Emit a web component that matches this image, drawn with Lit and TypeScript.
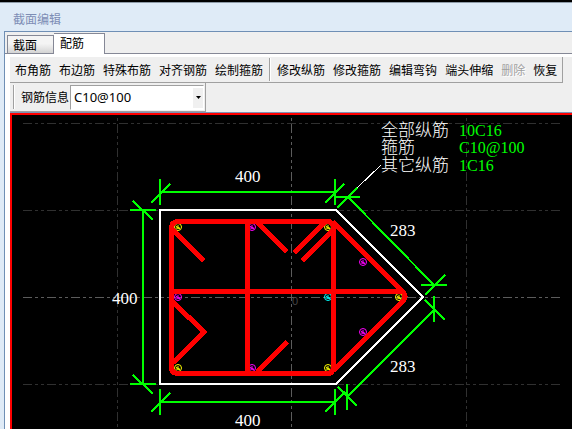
import { LitElement, html, svg, css } from "lit";
import { customElement, state } from "lit/decorators.js";

type Seg = [number, number, number, number];

/** Dimension lines with their end ticks and slashes. */
const DIMENSIONS: Seg[] = [
  // top
  [160, 192, 335, 192], [160, 179, 160, 205], [151, 203, 170, 184], [335, 179, 335, 205], [325, 203, 344, 184],
  // left
  [143, 210, 143, 384], [130, 210, 156, 210], [133, 201, 153, 220], [130, 384, 156, 384], [133, 375, 153, 394],
  // bottom
  [160, 402, 335, 402], [160, 389, 160, 415], [151, 412, 170, 393], [335, 389, 335, 415], [325, 412, 345, 392],
  // upper slope
  [348, 197, 434, 285], [335, 197, 360, 197], [337, 208, 357, 188], [421, 285, 447, 285], [425, 295, 445, 275],
  // lower slope
  [434, 310, 347, 397], [434, 296, 434, 322], [425, 300, 445, 320], [347, 384, 347, 410], [338, 387, 357, 406],
];

const BARS: [number, number, string][] = [
  [178, 227, "corner"], [328, 227, "corner"], [178, 368, "corner"], [328, 368, "corner"], [399, 297, "corner"],
  [252, 227, "side"], [252, 368, "side"], [178, 297, "side"], [363, 262, "side"], [363, 332, "side"],
  [328, 297, "other"],
];

const DIM_TEXT: [number, number, string][] = [
  [235, 182, "400"], [112, 304, "400"], [235, 426, "400"], [390, 236, "283"], [390, 372, "283"],
];

const NOTES: [number, string, string][] = [
  [136, "全部纵筋", "10C16"], [153, "箍筋", "C10@100"], [171, "其它纵筋", "1C16"],
];

@customElement("section-drawing")
export class SectionDrawing extends LitElement {
  static styles = css`
    :host { display: block; background: #000; border-top: 2px solid #f00; border-left: 2px solid #f00; }
    svg { display: block; width: 100%; height: auto; }
    .lines { fill: none; shape-rendering: crispEdges; }
    .axis { stroke: #303030; stroke-width: 1; stroke-dasharray: 9 3 3 3 3 3; }
    .main { stroke: #5c5c5c; }
    .outline { stroke: #fff; stroke-width: 2; }
    .leader { stroke: #fff; stroke-width: 1; }
    .dim { stroke: #0f0; stroke-width: 2; }
    .rebar { stroke: #f00; stroke-width: 5; stroke-linejoin: round; }
    .bar { fill: none; stroke-width: 1; }
    .corner { stroke: #ff0; }
    .side { stroke: #f0f; }
    .other { stroke: #0ff; }
    text { fill: #fff; font-family: "Liberation Serif", serif; font-size: 17px; }
    .name { font-family: "Noto Sans CJK SC", sans-serif; font-weight: 300; }
    .value { fill: #0f0; font-size: 16px; }
    .origin { fill: #444; font-family: "Liberation Sans", sans-serif; font-size: 11px; }
  `;

  render() {
    return html`
      <svg viewBox="12 115 560 314" role="img" aria-label="配筋">
        <g class="lines">
          ${[123, 210, 297, 384].map((y) => svg`<path class="axis ${y === 297 ? "main" : ""}" d="M23 ${y}.5H560" />`)}
          ${[117, 291, 466].map((x) => svg`<path class="axis ${x === 291 ? "main" : ""}" stroke-dashoffset="15" d="M${x}.5 115V429" />`)}
          <path class="outline" d="M160 210H336L423 297L336 384H160Z" />
          ${DIMENSIONS.map(([a, b, c, d]) => svg`<line class="dim" x1=${a} y1=${b} x2=${c} y2=${d} />`)}
          <path class="leader" d="M357 188L381 165" />
        </g>
        ${BARS.map(([x, y, kind]) => svg`
          <g class="bar ${kind}">
            <circle cx=${x} cy=${y} r="3.5" />
            <path d="M${x - 2} ${y + 1}H${x + 2}M${x} ${y - 2}V${y + 2}M${x - 2} ${y - 1}L${x + 2} ${y + 2}" />
          </g>`)}
        <g class="lines">
          <path class="rebar" d="M178 221.5H327Q333.5 221.5 333.5 228V367Q333.5 373.5 327 373.5H178Q171.5 373.5 171.5 367V228Q171.5 221.5 178 221.5Z" />
          <path class="rebar" d="M247.5 222V373M172 291.5H402" />
          <path class="rebar" d="M333 222L403 292Q407 297 403 301L333 371" />
          <path class="rebar" d="M173 230L204 261M256 221L287 252M325 222L294 253M333 230L302 261" />
          <path class="rebar" d="M173 302L204 332L173 363M257 372L287 342" />
        </g>
        ${DIM_TEXT.map(([x, y, t]) => svg`<text x=${x} y=${y}>${t}</text>`)}
        ${NOTES.map(([y, name, value]) => svg`
          <text class="name" x="381" y=${y}>${name}</text>
          <text class="value" x="459" y=${y}>${value}</text>`)}
        <text class="origin" x="292" y="305">0</text>
      </svg>`;
  }
}

@customElement("app-root")
export class AppRoot extends LitElement {
  static styles = css`
    * { box-sizing: border-box; }
    :host {
      display: flex; flex-direction: column; min-height: 100vh; box-sizing: border-box;
      background: #dfebf7; border-top: 2px solid #000; overflow: hidden;
      font: 12px/16px "Noto Sans CJK SC", sans-serif; color: #000;
    }
    button, select { font: inherit; color: inherit; margin: 0; border-radius: 0; }
    .title { height: 29px; padding: 8px 13px 0; border-top: 1px solid #8e9ba8; color: #7d8db5; font-size: 12px; font-weight: 400; margin: 0; }
    .frame {
      flex: 1; display: flex; flex-direction: column; margin-left: 4px;
      border-top: 1px solid #6f8fb5; border-left: 1px solid #6f8fb5; background: #efefef;
    }
    .tabs { display: flex; align-items: flex-end; height: 22px; padding-left: 2px; border-bottom: 1px solid #858896; }
    .tab { height: 18px; padding: 0 16px 0 5px; border: 1px solid #858896; border-bottom: 0; background: linear-gradient(#f4f4f4 45%, #d4d4d4); text-align: left; }
    .tab.on { height: 21px; padding: 0 20px 3px 6px; background: #fff; margin-bottom: -1px; border-left: 0; }
    .page { flex: 1; display: flex; flex-direction: column; background: #fff; padding: 3px 0 0 5px; }
    .bars { background: #efefef; }
    .toolbar { display: flex; align-items: center; width: fit-content; height: 26px; padding: 0 1px; border-right: 1px solid #a0a0a0; border-bottom: 1px solid #a0a0a0; }
    .tool { border: 0; background: none; padding: 0 4px; white-space: nowrap; }
    .tool:disabled { color: #a0a0a0; text-shadow: 1px 1px #fff; }
    .sep { width: 2px; height: 23px; margin: 0 2px; border-left: 1px solid #a0a0a0; border-right: 1px solid #fff; }
    .info { display: flex; align-items: center; width: fit-content; height: 29px; padding: 0 1px 0 3px; border-right: 1px solid #a0a0a0; border-bottom: 1px solid #a0a0a0; }
    .grip { width: 2px; height: 24px; margin-right: 6px; border-left: 1px solid #a0a0a0; border-right: 1px solid #fff; }
    .combo { position: relative; display: flex; margin-left: 1px; }
    .combo select {
      appearance: none; width: 134px; height: 25px; padding: 0 16px 0 3px; background: #fff;
      border: 1px solid #fff; border-top-color: #a0a0a0; border-left-color: #a0a0a0; font: 13px/20px "Noto Sans", sans-serif;
    }
    .arrow { position: absolute; right: 1px; top: 3px; bottom: 2px; width: 10px; background: #f0f0f0; display: grid; place-items: center; pointer-events: none; }
    .arrow svg { width: 5px; height: 3px; }
    .canvas { flex: 1; display: flex; flex-direction: column; border-top: 1px solid #7b93b5; }
    section-drawing { flex: 1; }
  `;

  @state() private tab = 1;

  private tool(name: string, disabled = false) {
    return html`<button class="tool" ?disabled=${disabled}>${name}</button>`;
  }

  render() {
    return html`
      <h1 class="title">截面编辑</h1>
      <div class="frame">
        <div class="tabs" role="tablist">
          ${["截面", "配筋"].map((name, i) => html`
            <button class="tab ${i === this.tab ? "on" : ""}" role="tab" aria-selected=${i === this.tab}
              @click=${() => (this.tab = i)}>${name}</button>`)}
        </div>
        <div class="page">
          <div class="bars">
            <div class="toolbar" role="toolbar">
              ${["布角筋", "布边筋", "特殊布筋", "对齐钢筋", "绘制箍筋"].map((n) => this.tool(n))}
              <span class="sep"></span>
              ${["修改纵筋", "修改箍筋", "编辑弯钩", "端头伸缩"].map((n) => this.tool(n))}
              ${this.tool("删除", true)} ${this.tool("恢复")}
            </div>
            <div class="info">
              <span class="grip"></span>
              <label for="rebar-info">钢筋信息</label>
              <div class="combo">
                <select id="rebar-info"><option>C10@100</option></select>
                <span class="arrow"><svg viewBox="0 0 5 3"><path d="M0 0H5L2.5 3Z" /></svg></span>
              </div>
            </div>
          </div>
          <div class="canvas"><section-drawing></section-drawing></div>
        </div>
      </div>`;
  }
}
